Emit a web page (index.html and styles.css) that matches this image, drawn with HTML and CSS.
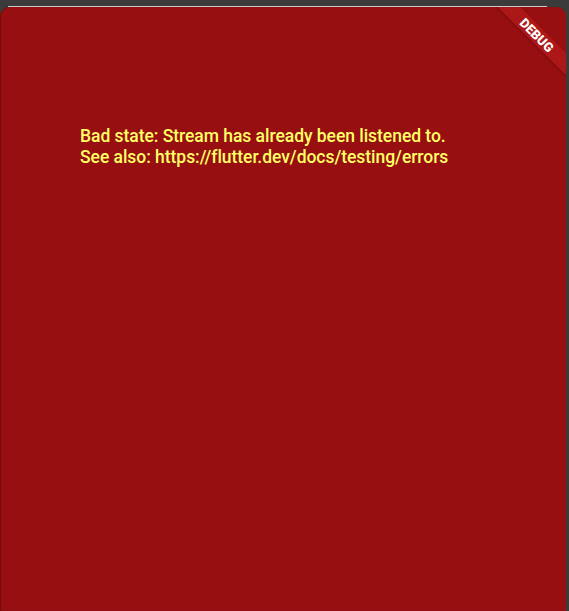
FILE: index.html
```html
<!DOCTYPE html>
<html>
<head>
<meta charset="utf-8">
<link rel="stylesheet" href="styles.css">
</head>
<body>
<div class="topbar"></div>
<div class="panel">
  <div class="message">
    <div>Bad state: Stream has already been listened to.</div>
    <div>See also: https://flutter.dev/docs/testing/errors</div>
  </div>
  <div class="banner"><span>DEBUG</span></div>
</div>
</body>
</html>
```
FILE: styles.css
```css
html, body {
  margin: 0;
  padding: 0;
  width: 569px;
  height: 611px;
  overflow: hidden;
  background: #3b3b3b;
}
.topbar {
  margin: 0 22px 0 8px;
  border-bottom: 1px solid #c8c8c8;
  box-sizing: border-box;
  height: 7px;
}
.panel {
  position: relative;
  width: 566px;
  height: 604px;
  background: #970f11;
  border-radius: 9px 9px 0 0;
  overflow: hidden;
  box-shadow: inset 1px 0 1px rgba(0,0,0,0.25);
}
.message {
  padding: 119px 0 0 80px;
  font-family: Roboto, "Liberation Sans", sans-serif;
  font-weight: 500;
  font-size: 17.5px;
  line-height: 21px;
  color: #ffff66;
  letter-spacing: -0.04px;
}
.banner {
  position: absolute;
  top: 20px;
  right: -46px;
  width: 150px;
  height: 16px;
  background: rgba(183, 28, 28, 0.63);
  transform: rotate(45deg);
  display: flex;
  align-items: center;
  justify-content: center;
  box-shadow: 0 1px 3px rgba(0,0,0,0.2);
}
.banner span {
  font-family: Roboto, "Liberation Sans", sans-serif;
  font-weight: 900;
  font-size: 13px;
  line-height: 1;
  color: #ffffff;
}
```
